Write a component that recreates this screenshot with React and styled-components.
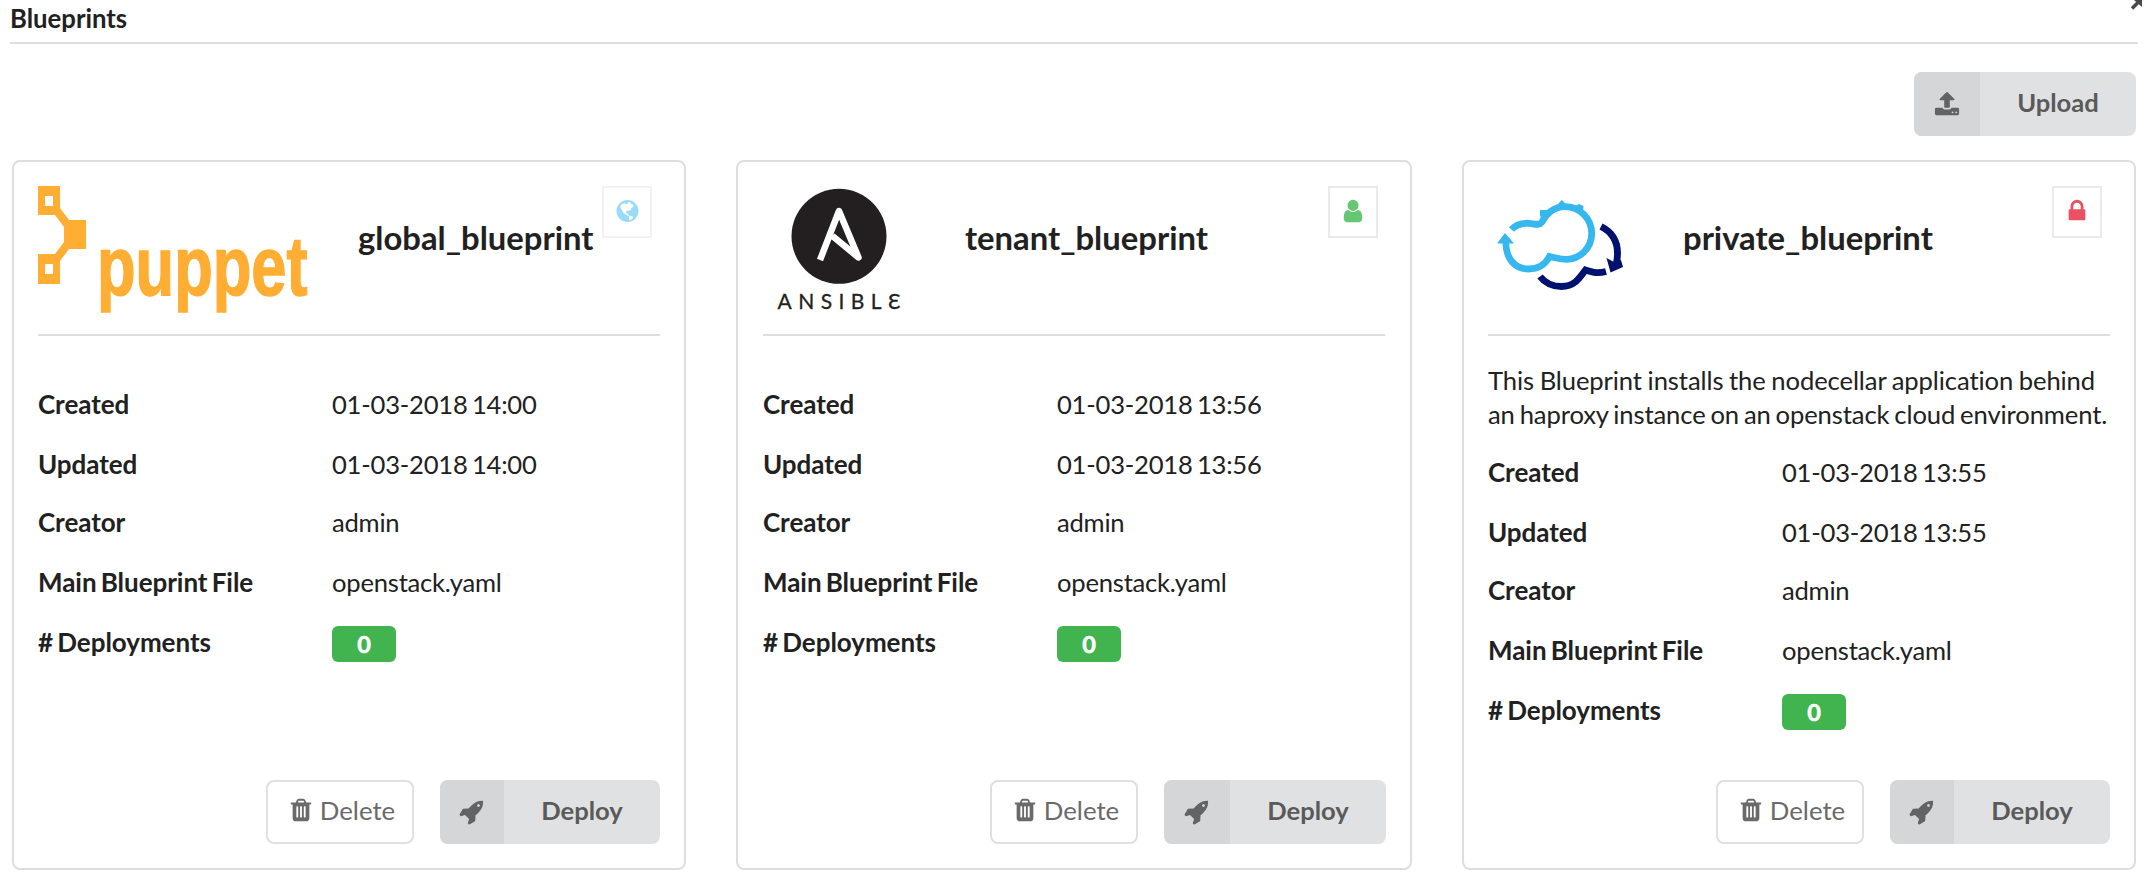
import React from 'react';
import styled, { createGlobalStyle } from 'styled-components';

const GlobalStyle = createGlobalStyle`
  * { box-sizing: border-box; }
  body {
    margin: 0;
    background: #fff;
    color: #212121;
    font-family: Lato, 'Liberation Sans', sans-serif;
    font-size: 26px;
    font-variant-ligatures: none;
    overflow: hidden;
  }
`;

const Page = styled.main`
  position: relative;
  width: 2152px;
  height: 892px;
  overflow: hidden;
  padding: 0 14px 0 10px;
`;

const TitleBar = styled.header`
  height: 44px;
  border-bottom: 2px solid #dededf;
`;

const Title = styled.h1`
  margin: 0;
  padding-top: 1px;
  font-size: 25.7px;
  line-height: 34px;
  font-weight: 700;
`;

const ExpandCorner = styled.svg`
  position: absolute;
  top: 0;
  left: 2130px;
  width: 14px;
  height: 10px;
`;

const Toolbar = styled.div`
  display: flex;
  justify-content: flex-end;
  padding: 28px 2px 0 0;
`;

const LabeledButton = styled.button`
  display: flex;
  flex: none;
  width: ${(p) => p.$width}px;
  height: 64px;
  padding: 0;
  border: 0;
  border-radius: 8px;
  overflow: hidden;
  background: #e0e1e2;
  color: #5a5a5a;
  font: 700 25.6px Lato, sans-serif;
`;

const ButtonIcon = styled.span`
  flex: none;
  width: ${(p) => p.$width}px;
  display: flex;
  align-items: center;
  justify-content: center;
  background: #d5d6d7;
  color: #636363;
`;

const ButtonText = styled.span`
  flex: 1;
  line-height: 61px;
  text-align: center;
`;

const OutlineButton = styled.button`
  display: flex;
  flex: none;
  align-items: center;
  justify-content: center;
  gap: 6px;
  width: 148px;
  height: 64px;
  padding: 0 0 4px 3px;
  border: 2px solid #dfe0e0;
  border-radius: 8px;
  background: #fff;
  color: #6a6a6a;
  font: 400 25.8px Lato, sans-serif;
`;

const Cards = styled.section`
  display: grid;
  grid-template-columns: 674px 676px 674px;
  justify-content: space-between;
  padding: 24px 2px 0;
`;

const Card = styled.article`
  display: flex;
  flex-direction: column;
  height: 710px;
  padding: 24px ${(p) => p.$inset}px;
  border: 2px solid #dededf;
  border-radius: 8px;
`;

const CardHeader = styled.div`
  display: flex;
  position: relative;
  height: 150px;
  border-bottom: 2px solid #dededf;
`;

const Logo = styled.svg`
  flex: none;
  display: block;
  width: ${(p) => p.$width}px;
  height: 128px;
`;

const CardName = styled.h2`
  margin: 0;
  padding: 31px 0 0 ${(p) => p.$gap}px;
  font-size: 32.8px;
  line-height: 42px;
  font-weight: 700;
`;

const Visibility = styled.div`
  position: absolute;
  top: 0;
  right: ${(p) => p.$right}px;
  width: 50px;
  height: 52px;
  display: flex;
  align-items: center;
  justify-content: center;
  padding-bottom: 2px;
  border: 2px solid ${(p) => p.$line};
  color: ${(p) => p.$color};
`;

const Description = styled.p`
  margin: 27px -4px -2px 0;
  line-height: 34px;
  font-size: 25.6px;
  letter-spacing: -0.1px;
  word-spacing: -1.5px;
  white-space: nowrap;
`;

const DescriptionLine = styled.span`
  display: block;
  word-spacing: ${(p) => p.$gap}px;
`;

const Details = styled.dl`
  display: grid;
  grid-template-columns: 294px 1fr;
  grid-template-rows: 60px 58px 60px 60px 60px;
  margin: ${(p) => p.$top}px 0 0;
  line-height: 60px;
`;

const Term = styled.dt`
  font-weight: 700;
  font-size: 26px;
  word-spacing: -2px;
  letter-spacing: -0.05px;
`;

const Value = styled.dd`
  margin: 0;
  font-size: 25.6px;
  letter-spacing: -0.22px;
  word-spacing: -2px;
`;

const Count = styled.span`
  display: flex;
  width: 64px;
  height: 36px;
  margin-top: 14px;
  align-items: center;
  justify-content: center;
  border-radius: 6px;
  background: #41b450;
  color: #fff;
  font-size: 23.5px;
  font-weight: 700;
  line-height: 36px;
  -webkit-text-stroke: 0.6px #fff;
`;

const Actions = styled.div`
  display: flex;
  justify-content: flex-end;
  gap: 26px;
  margin: auto ${(p) => -p.$outset}px 0 0;
`;

const Glyph = styled.svg`
  flex: none;
  display: block;
  width: ${(p) => p.$size}px;
  height: ${(p) => p.$size}px;
  fill: currentColor;
`;

const PATHS = {
  lock: 'M640 768h512v-192q0-106-75-181t-181-75-181 75-75 181v192zm832 96v576q0 40-28 68t-68 28h-960q-40 0-68-28t-28-68v-576q0-40 28-68t68-28h32v-192q0-184 132-316t316-132 316 132 132 316v192h32q40 0 68 28t28 68z',
  user: 'M1536 1399q0 109-62.5 187t-150.5 78h-854q-88 0-150.5-78t-62.5-187q0-85 8.5-160.5t31.5-152 58.5-131 94-89 134.5-34.5q131 128 313 128t313-128q76 0 134.5 34.5t94 89 58.5 131 31.5 152 8.5 160.5zm-256-887q0 159-112.5 271.5t-271.5 112.5-271.5-112.5-112.5-271.5 112.5-271.5 271.5-112.5 271.5 112.5 112.5 271.5z',
  trash: 'M704 1376v-704q0-14-9-23t-23-9h-64q-14 0-23 9t-9 23v704q0 14 9 23t23 9h64q14 0 23-9t9-23zm256 0v-704q0-14-9-23t-23-9h-64q-14 0-23 9t-9 23v704q0 14 9 23t23 9h64q14 0 23-9t9-23zm256 0v-704q0-14-9-23t-23-9h-64q-14 0-23 9t-9 23v704q0 14 9 23t23 9h64q14 0 23-9t9-23zm-544-992h448l-48-117q-7-9-17-11h-317q-10 2-17 11zm928 32v64q0 14-9 23t-23 9h-96v948q0 83-47 143.5t-113 60.5h-832q-66 0-113-58.5t-47-141.5v-952h-96q-14 0-23-9t-9-23v-64q0-14 9-23t23-9h309l70-167q15-37 54-63t79-26h320q40 0 79 26t54 63l70 167h309q14 0 23 9t9 23z',
  upload: 'M1344 1472q0-26-19-45t-45-19-45 19-19 45 19 45 45 19 45-19 19-45zm256 0q0-26-19-45t-45-19-45 19-19 45 19 45 45 19 45-19 19-45zm128-224v320q0 40-28 68t-68 28h-1472q-40 0-68-28t-28-68v-320q0-40 28-68t68-28h427q21 56 70.5 92t110.5 36h256q61 0 110.5-36t70.5-92h427q40 0 68 28t28 68zm-325-648q-17 40-59 40h-256v448q0 26-19 45t-45 19h-256q-26 0-45-19t-19-45v-448h-256q-42 0-59-40-17-39 14-69l448-448q18-19 45-19t45 19l448 448q31 30 14 69z',
  rocket: 'M1440 448q0-40-28-68t-68-28-68 28-28 68 28 68 68 28 68-28 28-68zm224-288q0 249-75.5 430.5t-253.5 360.5q-81 80-195 176l-20 379q-2 16-16 26l-384 224q-7 4-16 4-12 0-23-9l-64-64q-13-14-8-32l85-276-281-281-276 85q-3 1-9 1-14 0-23-9l-64-64q-17-19-5-39l224-384q10-14 26-16l379-20q96-114 176-195 188-187 358-258t431-71q14 0 24 9.5t10 22.5z',
};

const Icon = ({ name, size = 26 }) => (
  <Glyph $size={size} viewBox="0 0 1792 1792" aria-hidden="true">
    <path d={PATHS[name]} />
  </Glyph>
);

const Globe = () => (
  <Glyph $size={22} viewBox="-0.5 0 22 22" overflow="visible" aria-hidden="true">
    <circle cx="11" cy="11" r="11" />
    <path fill="#fff" d="M3.500 6L6 3.800L9 3.200L10 4.200L11.500 3.800L11 2.500L13.500 2L14 3.400L16.800 4.600L17 6.500L14.800 8.200L14.300 10L12.800 10.800L11.500 10.400L9.500 11.800L9.600 13.200L11.300 13.400L11.800 15L13 15.800L16.500 16.600L16.200 18.300L14 20L12.600 19.700L12.300 16.300L9.500 14.600L7.200 13.200L5.400 10.200L4.300 8.600Z" />
  </Glyph>
);

const PuppetLogo = () => (
  <Logo $width={270} viewBox="0 0 270 128">
    <path fill="#ffae33" fillRule="evenodd" d="M0 0H22V22L31 34H48V63H31L22 75V98H0V68H17L26 56V41L17 29H0ZM7 10V20H15V10ZM7 78V88H15V78Z" />
    <text x="59" y="109" textLength="210.500" lengthAdjust="spacingAndGlyphs" fill="#ffae33" stroke="#ffae33" strokeWidth="1.500" fontFamily="Liberation Sans, sans-serif" fontWeight="700" fontSize="84">puppet</text>
  </Logo>
);

const AnsibleLogo = () => (
  <Logo $width={152} viewBox="0 0 152 128">
    <circle cx="76" cy="50.300" r="47.500" fill="#231f20" />
    <path d="M57 74L76 25L95.500 71.500L69.500 50" fill="none" stroke="#fff" strokeWidth="6.500" strokeLinejoin="round" />
    <text x="14.500" y="123" textLength="123" fill="#231f20" stroke="#231f20" strokeWidth="0.300" fontFamily="Lato, sans-serif" fontSize="21">ANSIBLƐ</text>
  </Logo>
);

const CloudLogo = () => (
  <Logo $width={152} viewBox="0 0 152 128">
    <g fill="none" strokeWidth="6.800">
      <path stroke="#36b8ee" d="M23.500 43.500C28 38 34 37 41 37.300C47 38 51 40 54 36C58 28 66 20.700 77 20.700C92 20.700 103.700 33 103.700 47.500C103.700 62 92 73.300 78 73.300C71 73.300 66 71.500 61.500 70.500C57 79 50 83 40.500 83C27 83 17.500 73 17.800 55" />
      <path stroke="#00106f" d="M113 40.500C126 47 132 59 128.500 77M118 85.500C109 88 104 86 97.500 84C91 93 86 100.500 73.500 100.500C64 100.500 57 97 52 90.500" />
    </g>
    <path fill="#36b8ee" d="M17 47L9 57.500H26ZM52 24L59 24L63 28L56 34L52 30ZM70 18L73.700 14L78 18L77 22H71ZM86 21L91 18L95.500 20L95 26L91 27Z" />
    <path fill="#00106f" d="M118.500 72L126 76L133 74L135 81L122.500 86.500Z" />
  </Logo>
);

const BLUEPRINTS = [
  { name: 'global_blueprint', logo: <PuppetLogo />, gap: 50, scope: 'globe', color: '#99dbf8', line: '#f2f2f2', date: '01-03-2018 14:00' },
  { name: 'tenant_blueprint', logo: <AnsibleLogo />, gap: 50, scope: 'user', color: '#67c673', line: '#eaeaea', date: '01-03-2018 13:56', inset: 25 },
  {
    name: 'private_blueprint', logo: <CloudLogo />, gap: 43, scope: 'lock', color: '#ec5063', line: '#eaeaea', date: '01-03-2018 13:55',
    description: [
      { text: 'This Blueprint installs the nodecellar application behind', gap: -0.8 },
      { text: 'an haproxy instance on an openstack cloud environment.', gap: -1.6 },
    ],
  },
];

const BlueprintCard = ({ item }) => {
  const inset = item.inset || 24;
  const outset = inset - 24;
  return (
    <Card $inset={inset}>
      <CardHeader>
        {item.logo}
        <CardName $gap={item.gap}>{item.name}</CardName>
        <Visibility $color={item.color} $line={item.line} $right={8 - outset}>
          {item.scope === 'globe' ? <Globe /> : <Icon name={item.scope} />}
        </Visibility>
      </CardHeader>
      {item.description && (
        <Description>
          {item.description.map((line) => (
            <DescriptionLine key={line.text} $gap={line.gap}>{line.text}</DescriptionLine>
          ))}
        </Description>
      )}
      <Details $top={item.description ? 13 : 38}>
        <Term>Created</Term>
        <Value>{item.date}</Value>
        <Term>Updated</Term>
        <Value>{item.date}</Value>
        <Term>Creator</Term>
        <Value>admin</Value>
        <Term>Main Blueprint File</Term>
        <Value>openstack.yaml</Value>
        <Term># Deployments</Term>
        <Value><Count>0</Count></Value>
      </Details>
      <Actions $outset={outset}>
        <OutlineButton>
          <Icon name="trash" />
          Delete
        </OutlineButton>
        <LabeledButton $width={220 + outset * 2}>
          <ButtonIcon $width={64 + outset * 2}><Icon name="rocket" /></ButtonIcon>
          <ButtonText>Deploy</ButtonText>
        </LabeledButton>
      </Actions>
    </Card>
  );
};

export default function App() {
  return (
    <Page>
      <GlobalStyle />
      <TitleBar><Title>Blueprints</Title></TitleBar>
      <ExpandCorner viewBox="0 0 14 10">
        <path d="M2 8.500L9 1.500" stroke="#4a4a4a" strokeWidth="3.500" />
        <path d="M4 0H12V7Z" fill="#4a4a4a" />
      </ExpandCorner>
      <Toolbar>
        <LabeledButton $width={222}>
          <ButtonIcon $width={66}><Icon name="upload" /></ButtonIcon>
          <ButtonText>Upload</ButtonText>
        </LabeledButton>
      </Toolbar>
      <Cards>
        {BLUEPRINTS.map((item) => <BlueprintCard key={item.name} item={item} />)}
      </Cards>
    </Page>
  );
}
